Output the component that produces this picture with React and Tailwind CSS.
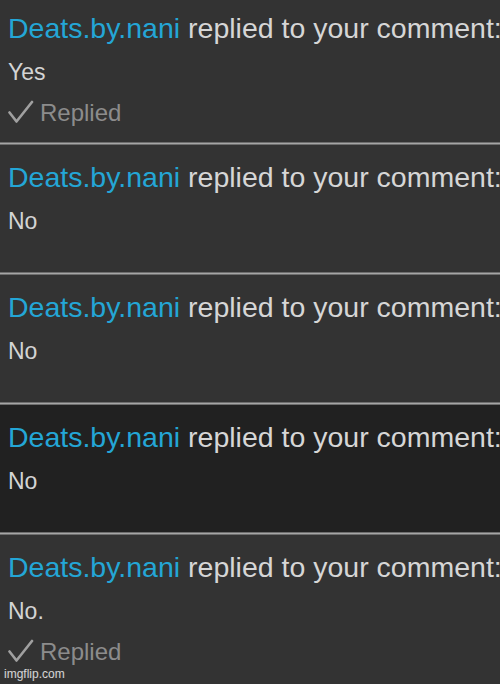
import React from "react";

const font = { fontFamily: '"Liberation Sans", Arial, sans-serif' };

function Check() {
  return (
    <svg width="26" height="24" viewBox="0 0 26 24" className="shrink-0">
      <polyline
        points="1.5,12.5 8.5,21.5 24,2"
        fill="none"
        stroke="#a0a0a0"
        strokeWidth="2.6"
        strokeLinecap="round"
        strokeLinejoin="round"
      />
    </svg>
  );
}

function Row({ body, replied, dark, first }) {
  return (
    <div className={`${dark ? "bg-[#212121]" : "bg-[#333333]"} pl-2 ${first ? "pt-[7px]" : "pt-[11px]"} ${replied ? "pb-[12px]" : "pb-[29px]"}`}>
      <div className="text-[28.5px] leading-[43px] whitespace-nowrap">
        <span className="text-[#24a6d6]">Deats.by.nani</span>
        <span className="text-[#d6d6d6]"> replied to your comment:</span>
      </div>
      <div className="text-[23px] leading-[44px] text-[#d4d4d4]">{body}</div>
      {replied && (
        <div className="flex items-center h-[36px] gap-[6px] text-[24px] text-[#8c8c8c]">
          <Check />
          <span className="leading-[36px] translate-y-[1px]">Replied</span>
        </div>
      )}
    </div>
  );
}

function Divider() {
  return <div className="h-[3px] border-y border-[#6e6e6e] bg-[#a6a6a6]" />;
}

export default function App() {
  return (
    <div className="relative w-[500px] h-[684px] overflow-hidden bg-[#333333]" style={font}>
      <Row body="Yes" replied first />
      <Divider />
      <Row body="No" />
      <Divider />
      <Row body="No" />
      <Divider />
      <Row body="No" dark />
      <Divider />
      <Row body="No." replied />
      <div className="absolute left-[4px] bottom-[3px] text-[12px] leading-[14px] text-white/80">imgflip.com</div>
    </div>
  );
}
